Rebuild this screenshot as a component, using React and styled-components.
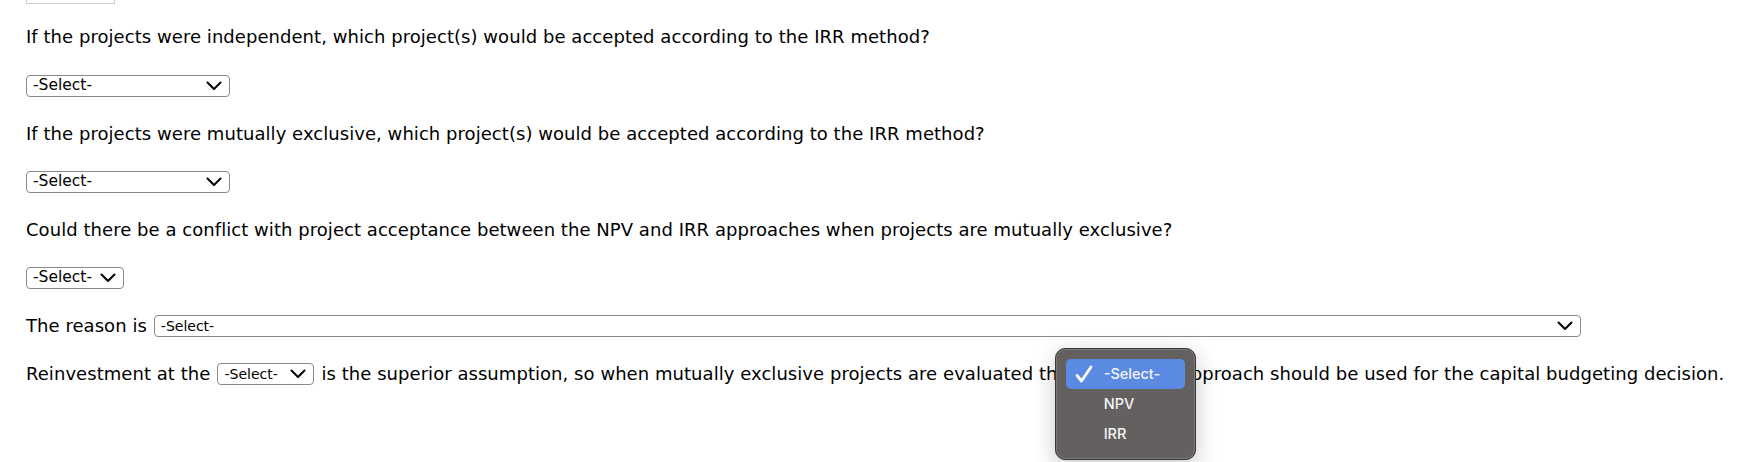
import React from "react";
import styled, { createGlobalStyle } from "styled-components";

const questions = [
    "If the projects were independent, which project(s) would be accepted according to the IRR method?",
    "If the projects were mutually exclusive, which project(s) would be accepted according to the IRR method?",
];

function Chevron() {
    return (
        <svg width="16" height="10" viewBox="0 0 16 10">
            <path
                d="M1.5 1.5 L8 8 L14.5 1.5"
                fill="none"
                stroke="#000"
                strokeWidth="2"
                strokeLinecap="round"
                strokeLinejoin="round"
            />
        </svg>
    );
}

function Select({ width, small, children }) {
    return (
        <SelectBox $w={width} $small={small}>
            <span>-Select-</span>
            <Chevron />
            {children}
        </SelectBox>
    );
}

function OptionsMenu() {
    const options = ["-Select-", "NPV", "IRR"];
    return (
        <Menu>
            {options.map((option, i) => (
                <MenuItem key={option} $active={i === 0}>
                    {i === 0 && (
                        <Check width="18" height="18" viewBox="0 0 18 18">
                            <path
                                d="M2 10.5 L6.5 16 L16 2"
                                fill="none"
                                stroke="#fff"
                                strokeWidth="2.8"
                                strokeLinecap="round"
                                strokeLinejoin="round"
                            />
                        </Check>
                    )}
                    {option}
                </MenuItem>
            ))}
        </Menu>
    );
}

export default function App() {
    return (
        <>
            <GlobalStyle />
            <Page>
                <TopStub />
                <Line $first>{questions[0]}</Line>
                <Line>
                    <Select width={204} />
                </Line>
                <Line>{questions[1]}</Line>
                <Line>
                    <Select width={204} />
                </Line>
                <Line>
                    Could there be a conflict with project acceptance between
                    the NPV and IRR approaches when projects are mutually
                    exclusive?
                </Line>
                <Line>
                    <Select width={98} />
                </Line>
                <Line>
                    The reason is <Select width={1427} small />
                </Line>
                <Line>
                    Reinvestment at the <Select width={97} small /> is the
                    superior assumption, so when mutually exclusive projects are
                    evaluated the{" "}
                    <Select width={97} small>
                        <OptionsMenu />
                    </Select>{" "}
                    approach should be used for the capital budgeting decision.
                </Line>
            </Page>
        </>
    );
}

const GlobalStyle = createGlobalStyle`
    body {
        margin: 0;
        background: #fff;
        color: #000;
        font-family: "DejaVu Sans", Verdana, sans-serif;
    }
`;
const Page = styled.main`
    display: flex;
    flex-direction: column;
    gap: 18px;
    padding: 0 0 60px 26px;
    min-height: 462px;
    box-sizing: border-box;
`;
const TopStub = styled.div`
    width: 89px;
    height: 4px;
    border: 1px solid #cfcfcf;
    border-top: none;
    box-sizing: border-box;
`;
const Line = styled.div`
    height: 30px;
    margin-bottom: ${(p) => (p.$first ? "1px" : "0")};
    line-height: 30px;
    font-size: 18px;
    letter-spacing: 0.05px;
    white-space: nowrap;
    display: flex;
    align-items: center;
    gap: 7px;
`;
const SelectBox = styled.span`
    position: relative;
    display: inline-flex;
    align-items: center;
    justify-content: space-between;
    box-sizing: border-box;
    width: ${(p) => p.$w}px;
    height: 22px;
    padding: 0 7px 0 6px;
    border: 1px solid #8a8a8a;
    border-radius: 4px;
    background: #fff;
    letter-spacing: 0;
    font-size: ${(p) => (p.$small ? "14px" : "15.5px")};
    line-height: 1;
`;
const Menu = styled.div`
    position: absolute;
    left: -22px;
    top: -16px;
    width: 141px;
    box-sizing: border-box;
    padding: 10px 10px;
    border: 1px solid #3b3938;
    border-radius: 10px;
    background: #63605f;
    box-shadow: inset 0 0 0 1px rgba(255, 255, 255, 0.16),
        0 6px 22px rgba(0, 0, 0, 0.22);
    z-index: 2;
`;
const MenuItem = styled.div`
    position: relative;
    height: 30px;
    display: flex;
    align-items: center;
    padding-left: 38px;
    border-radius: 5px;
    background: ${(p) => (p.$active ? "#5a8ae2" : "transparent")};
    color: #f4f4f4;
    font-family: Inter, "Noto Sans", sans-serif;
    font-size: 14.5px;
    font-weight: 500;
`;
const Check = styled.svg`
    position: absolute;
    left: 9px;
    top: 6px;
`;
